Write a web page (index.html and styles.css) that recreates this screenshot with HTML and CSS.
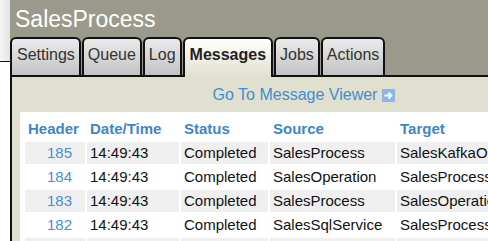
FILE: index.html
```html
<!DOCTYPE html>
<html lang="en">
<head>
    <meta charset="UTF-8">
    <title>SalesProcess</title>
    <link rel="stylesheet" href="styles.css">
</head>
<body>
    <div class="page">
        <div class="side"></div>

        <div class="panel">
            <div class="titlebar">
                <div class="title">SalesProcess</div>
                <div class="tabs">
                    <div class="tab">Settings</div>
                    <div class="tab">Queue</div>
                    <div class="tab">Log</div>
                    <div class="tab active">Messages</div>
                    <div class="tab">Jobs</div>
                    <div class="tab">Actions</div>
                </div>
            </div>

            <div class="content">
                <div class="viewer-link">
                    <a href="#">Go To Message Viewer</a>
                    <span class="go-icon">
                        <svg width="13" height="13" viewBox="0 0 13 13">
                            <rect width="13" height="13" fill="#8db6e6"/>
                            <path d="M2.5 6.5h6.5M6.5 3.5l3 3-3 3" fill="none" stroke="#fff" stroke-width="1.8"/>
                        </svg>
                    </span>
                </div>

                <div class="sheet">
                    <table class="messages">
                        <thead>
                            <tr>
                                <th class="col-id">Header</th>
                                <th class="col-time">Date/Time</th>
                                <th class="col-status">Status</th>
                                <th class="col-source">Source</th>
                                <th class="col-target">Target</th>
                            </tr>
                        </thead>
                        <tbody>
                            <tr>
                                <td class="num">185</td>
                                <td>14:49:43</td>
                                <td>Completed</td>
                                <td>SalesProcess</td>
                                <td>SalesKafkaOperation</td>
                            </tr>
                            <tr>
                                <td class="num">184</td>
                                <td>14:49:43</td>
                                <td>Completed</td>
                                <td>SalesOperation</td>
                                <td>SalesProcess</td>
                            </tr>
                            <tr>
                                <td class="num">183</td>
                                <td>14:49:43</td>
                                <td>Completed</td>
                                <td>SalesProcess</td>
                                <td>SalesOperation</td>
                            </tr>
                            <tr>
                                <td class="num">182</td>
                                <td>14:49:43</td>
                                <td>Completed</td>
                                <td>SalesSqlService</td>
                                <td>SalesProcess</td>
                            </tr>
                            <tr>
                                <td class="num">181</td>
                                <td>14:49:42</td>
                                <td>Completed</td>
                                <td>SalesProcess</td>
                                <td>SalesSqlService</td>
                            </tr>
                        </tbody>
                    </table>
                </div>
            </div>
        </div>
    </div>
</body>
</html>
```

FILE: styles.css
```css
body {
    margin: 0;
    background-color: #fff;
    font-family: "Liberation Sans", Arial, sans-serif;
    overflow: hidden;
}

.page {
    display: flex;
    align-items: flex-start;
}

/* sliver of the box to the left */
.side {
    flex: none;
    width: 10px;
    height: 61px;
    background: linear-gradient(to right, #f6f6f6, #e4e4e4);
    border-bottom: 1px solid #111;
}

.panel {
    flex: none;
    width: 578px;
}

.titlebar {
    background-color: #9b998b;
    padding-top: 5px;
}

.title {
    color: #fff;
    font-size: 23px;
    line-height: 28px;
    padding-left: 5px;
    margin-bottom: 4px;
}

.tabs {
    display: flex;
    gap: 1px;
    align-items: flex-end;
}

.tab {
    border: 2px solid #111;
    border-bottom: none;
    border-radius: 6px 6px 0 0;
    padding: 7px 4px 11px;
    font-size: 16px;
    line-height: 18px;
    color: #333;
    background: linear-gradient(#ebebeb, #c3c3c3);
}

.tab:first-child {
    padding-left: 5px;
}

.tab.active {
    position: relative; /* sits over the line below the tabs */
    z-index: 1;
    margin-bottom: -2px;
    padding: 7px 5px 13px;
    font-weight: bold;
    color: #222;
    background: linear-gradient(#ffffff, #e0e0d1);
}

.content {
    background-color: #e0e0d1;
    border-top: 2px solid #111;
    border-left: 2px solid #111;
    padding: 9px 0 0 8px;
}

.viewer-link {
    display: flex;
    justify-content: center;
    align-items: center;
    gap: 5px;
    margin-bottom: 8px;
    font-size: 16px;
    line-height: 18px;
}

.viewer-link a {
    color: #3f8dd2;
    text-decoration: none;
}

.go-icon {
    display: flex;
}

.sheet {
    background-color: #fff;
    padding: 4px 3px 20px;
}

.messages {
    border-collapse: separate;
    border-spacing: 2px;
    font-size: 15px;
    color: #111;
}

.messages th,
.messages td {
    padding: 2px 3px;
    line-height: 18px;
    text-align: left;
    white-space: nowrap;
}

.messages th {
    color: #3f86c6;
    font-weight: bold;
}

.messages tbody tr:nth-child(odd) td {
    background-color: #efefef;
}

.messages td.num {
    text-align: right;
    padding-right: 13px;
    color: #4a8fd0;
}

.col-id { width: 54px; }
.col-time { width: 86px; }
.col-status { width: 81px; }
.col-source { width: 119px; }
.col-target { width: 160px; }
```
